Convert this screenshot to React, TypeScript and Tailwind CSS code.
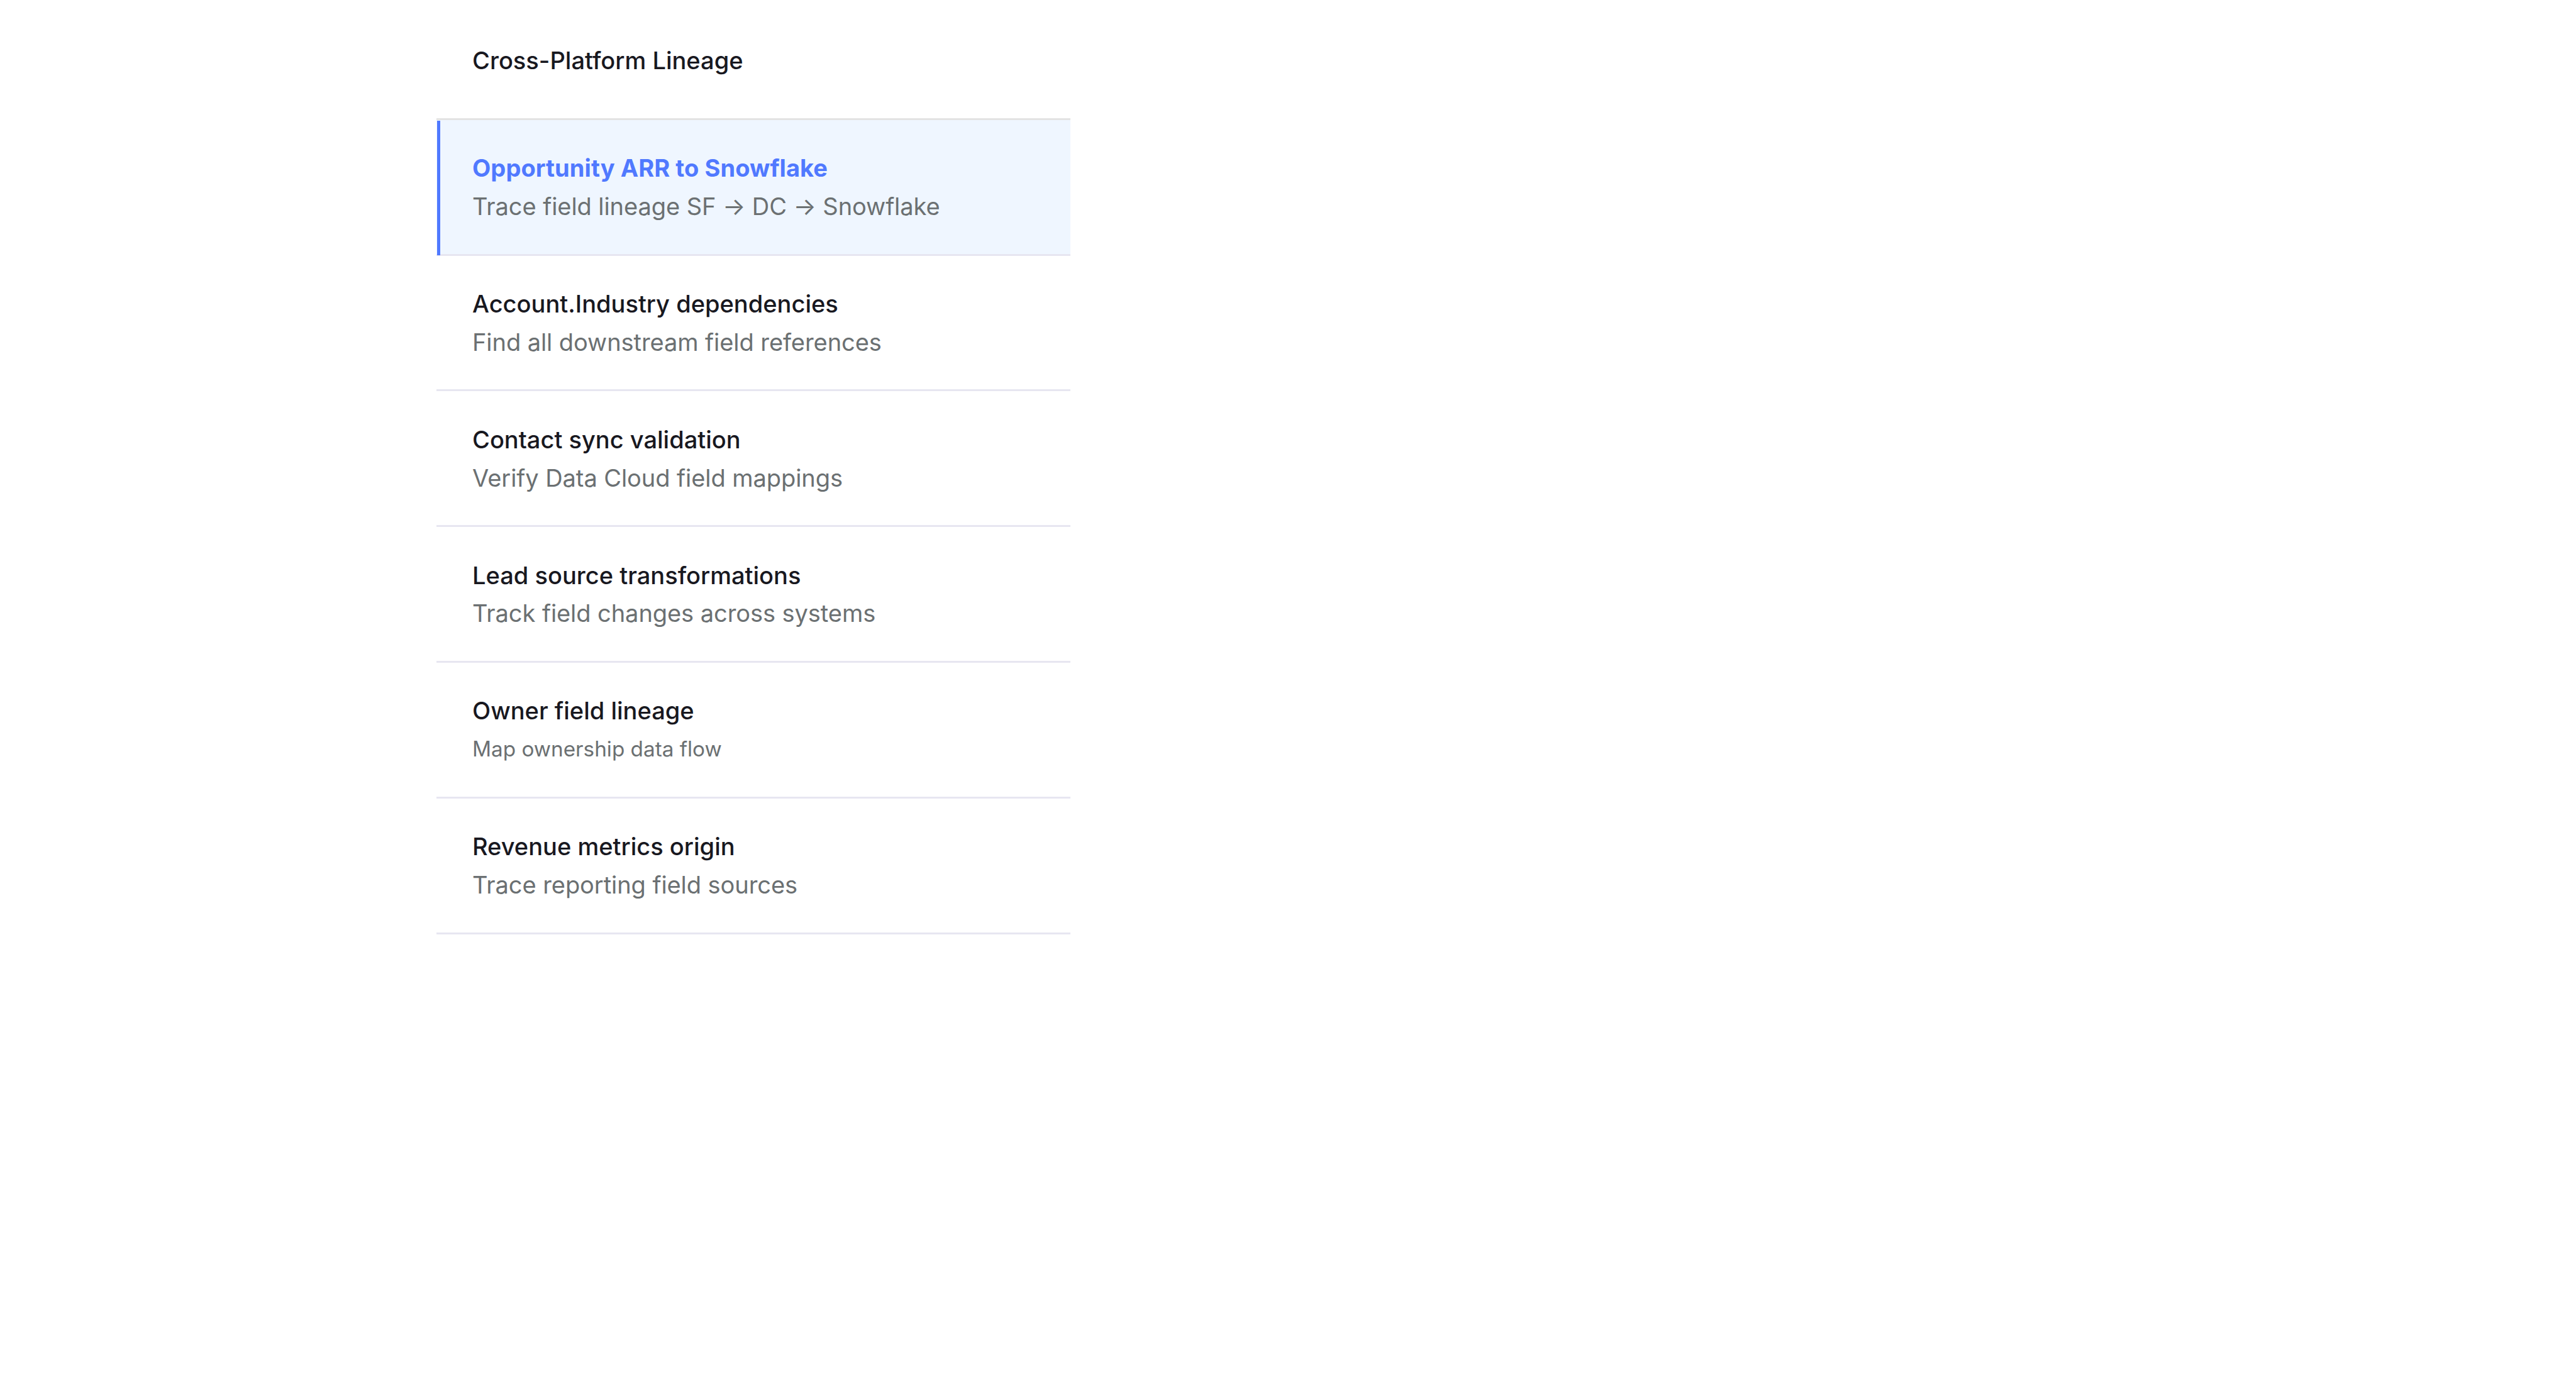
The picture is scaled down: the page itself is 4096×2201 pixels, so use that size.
type Item = { title: string; detail: string; active?: boolean; small?: boolean };

const items: Item[] = [
  { title: 'Opportunity ARR to Snowflake', detail: 'Trace field lineage SF → DC → Snowflake', active: true },
  { title: 'Account.Industry dependencies', detail: 'Find all downstream field references' },
  { title: 'Contact sync validation', detail: 'Verify Data Cloud field mappings' },
  { title: 'Lead source transformations', detail: 'Track field changes across systems' },
  { title: 'Owner field lineage', detail: 'Map ownership data flow', small: true },
  { title: 'Revenue metrics origin', detail: 'Trace reporting field sources' },
];

function Row({ title, detail, active, small }: Item) {
  return (
    <li
      className={`relative h-[215.83px] border-b-3 border-[#e7e6f1] pl-[57px] pt-[46.4px] ${active ? 'bg-[#eff6ff]' : ''}`}
    >
      {active && <span className="absolute top-[1px] -bottom-[2px] left-[1px] w-[5px] bg-[#5079ff]" />}
      <div
        className={`leading-[60.86px] ${active ? 'font-bold tracking-[0.06px] text-[#5079ff]' : 'font-medium text-[#18181f]'}`}
      >
        {title}
      </div>
      <div
        className={`text-[#6b7072] ${small ? 'text-[33.28px] leading-[60px]' : 'leading-[60.86px] tracking-[-0.08px]'}`}
      >
        {detail}
      </div>
    </li>
  );
}

export default function App() {
  return (
    <main className="h-[2201px] w-[4096px] overflow-hidden bg-white pl-[694px] font-['Inter',sans-serif] text-[38.04px] whitespace-nowrap">
      <section className="w-[1008px]">
        <h1 className="h-[190.7px] border-b-3 border-[#e3e3e3] pl-[57px] pt-[65.8px] leading-[60.86px] font-medium text-[#18181f]">
          Cross-Platform Lineage
        </h1>
        <ul>
          {items.map((item) => (
            <Row key={item.title} {...item} />
          ))}
        </ul>
      </section>
    </main>
  );
}
